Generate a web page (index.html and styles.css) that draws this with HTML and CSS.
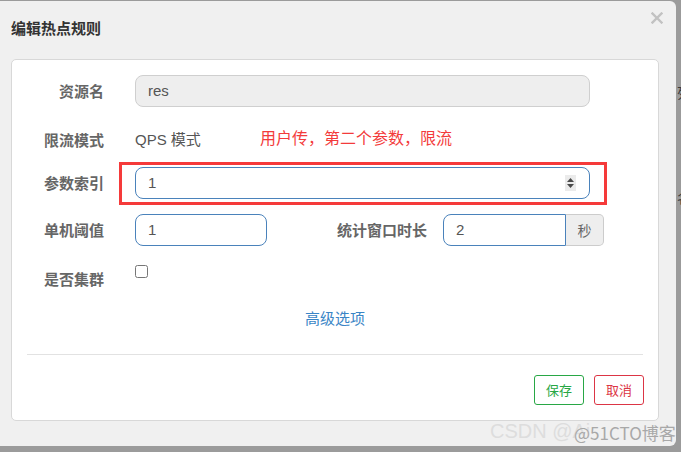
FILE: index.html
```html
<!DOCTYPE html>
<html lang="zh-CN">
<head>
<meta charset="utf-8">
<title>编辑热点规则</title>
<link rel="stylesheet" href="styles.css">
</head>
<body>
<div class="backdrop-page">
  <span class="bg-char c1">列</span>
  <span class="bg-char c2">名</span>
</div>
<div class="modal">
  <div class="modal-header">
    <div class="modal-title">编辑热点规则</div>
    <svg class="close" width="12" height="12" viewBox="0 0 12 12"><path d="M1.5 1.5 L10.5 10.5 M10.5 1.5 L1.5 10.5" stroke="#c2c2c2" stroke-width="2.4" stroke-linecap="square"/></svg>
  </div>
  <div class="card">
    <div class="row r1">
      <div class="label">资源名</div>
      <div class="field disabled wide">res</div>
    </div>
    <div class="row r2">
      <div class="label">限流模式</div>
      <div class="static">QPS 模式</div>
      <div class="note">用户传，第二个参数，限流</div>
    </div>
    <div class="row r3">
      <div class="label">参数索引</div>
      <div class="field active wide">1
        <svg class="spin" width="11" height="16" viewBox="0 0 11 16"><rect width="11" height="16" fill="#ebebeb"/><path d="M5.5 3 L9 7 L2 7 Z M2 9 L9 9 L5.5 13 Z" fill="#4a4a4a"/></svg>
      </div>
    </div>
    <div class="row r4">
      <div class="label">单机阈值</div>
      <div class="field active short">1</div>
      <div class="label label2">统计窗口时长</div>
      <div class="group">
        <div class="field active grouped">2</div>
        <div class="addon">秒</div>
      </div>
    </div>
    <div class="row r5">
      <div class="label">是否集群</div>
      <input class="check" type="checkbox">
    </div>
    <div class="advanced">高级选项</div>
    <div class="divider"></div>
    <div class="footer">
      <div class="btn save">保存</div>
      <div class="btn cancel">取消</div>
    </div>
    <div class="annot"></div>
  </div>
  <div class="wm wm1">CSDN @Ai</div>
  <div class="wm wm2">@51CTO博客</div>
</div>
</body>
</html>
```

FILE: styles.css
```css
html, body {
  margin: 0;
  padding: 0;
}
body {
  width: 681px;
  height: 452px;
  overflow: hidden;
  background: #9b9b9b;
  font-family: "Liberation Sans", "Noto Sans CJK SC", sans-serif;
  position: relative;
}
.backdrop-page {
  position: absolute;
  left: 676px;
  top: 0;
  width: 10px;
  height: 452px;
}
.bg-char {
  position: absolute;
  left: 1px;
  font-size: 14px;
  line-height: 14px;
  color: #3c3c3c;
  font-family: "Noto Sans CJK SC", sans-serif;
}
.c1 { top: 85px; }
.c2 { top: 190px; }
.modal {
  position: relative;
  margin-left: -6px;
  margin-top: 1px;
  width: 682px;
  height: 445px;
  box-sizing: border-box;
  background: #f0f0f0;
  border-radius: 6px;
  padding: 0 17px;
}
.modal-header {
  height: 58px;
  display: flex;
  justify-content: space-between;
  align-items: flex-start;
}
.modal-title {
  margin-top: 17px;
  font-size: 15px;
  line-height: 20px;
  font-weight: bold;
  color: #333;
  font-family: "Noto Sans CJK SC", sans-serif;
}
.close {
  margin-top: 11px;
  margin-right: -4px;
}
.card {
  position: relative;
  width: 648px;
  height: 362px;
  box-sizing: border-box;
  background: #fff;
  border: 1px solid #d8d8d8;
  border-radius: 5px;
  padding-top: 15px;
}
.row {
  display: flex;
  align-items: center;
  height: 32px;
}
.r1 { margin-bottom: 17px; }
.r2 { margin-bottom: 11px; }
.r3 { margin-bottom: 15px; }
.r4 { margin-bottom: 15px; }
.r5 { align-items: flex-start; }
.label {
  width: 92px;
  margin-right: 31px;
  text-align: right;
  font-size: 15px;
  line-height: 20px;
  font-weight: bold;
  color: #666;
  font-family: "Noto Sans CJK SC", sans-serif;
  flex: none;
}
.r5 .label { margin-top: 8px; }
.label2 {
  width: 160px;
  margin-right: 16px;
}
.field {
  height: 32px;
  box-sizing: border-box;
  border: 1px solid #ccc;
  border-radius: 8px;
  padding: 0 12px;
  font-size: 15px;
  line-height: 30px;
  color: #555;
  display: flex;
  align-items: center;
  justify-content: space-between;
  flex: none;
}
.field.disabled {
  background: #eee;
  border-color: #cfcfcf;
}
.field.active {
  border-color: #4a82bb;
}
.wide { width: 455px; }
.short { width: 132px; }
.spin { margin-right: 1px; }
.group {
  display: flex;
}
.grouped {
  width: 123px;
  border-radius: 8px 0 0 8px;
}
.addon {
  width: 38px;
  height: 32px;
  box-sizing: border-box;
  border: 1px solid #ccc;
  border-left: none;
  border-radius: 0 5px 5px 0;
  background: #eee;
  color: #666;
  font-size: 14px;
  line-height: 30px;
  text-align: center;
  font-family: "Noto Sans CJK SC", sans-serif;
}
.static {
  width: 125px;
  font-size: 15px;
  line-height: 20px;
  color: #555;
  flex: none;
}
.note {
  font-size: 16px;
  line-height: 20px;
  color: #f33b3b;
  margin-bottom: 6px;
  font-family: "Noto Sans CJK SC", sans-serif;
}
.check {
  width: 13px;
  height: 13px;
  margin: 4px 0 0 0;
}
.advanced {
  margin-top: 15px;
  text-align: center;
  font-size: 15px;
  line-height: 20px;
  color: #3a85c6;
  font-family: "Noto Sans CJK SC", sans-serif;
}
.divider {
  margin: 26px 15px 0;
  height: 1px;
  background: #e2e2e2;
}
.footer {
  display: flex;
  justify-content: flex-end;
  gap: 10px;
  padding: 20px 14px 0;
}
.btn {
  width: 50px;
  height: 30px;
  box-sizing: border-box;
  border: 1px solid;
  border-radius: 3px;
  font-size: 13px;
  line-height: 28px;
  text-align: center;
  font-family: "Noto Sans CJK SC", sans-serif;
}
.save {
  color: #28a745;
  border-color: #28a745;
}
.cancel {
  color: #dc3545;
  border-color: #dc3545;
}
.annot {
  position: absolute;
  left: 107px;
  top: 102px;
  width: 488px;
  height: 43px;
  box-sizing: border-box;
  border: 3px solid #f53a3a;
}
.wm {
  position: absolute;
  white-space: nowrap;
}
.wm1 {
  left: 496px;
  top: 418px;
  font-size: 20px;
  line-height: 24px;
  color: #dddddd;
}
.wm2 {
  left: 580px;
  top: 420px;
  font-size: 17px;
  line-height: 24px;
  color: #a8a8a8;
  font-family: "Noto Sans CJK SC", sans-serif;
}
```
